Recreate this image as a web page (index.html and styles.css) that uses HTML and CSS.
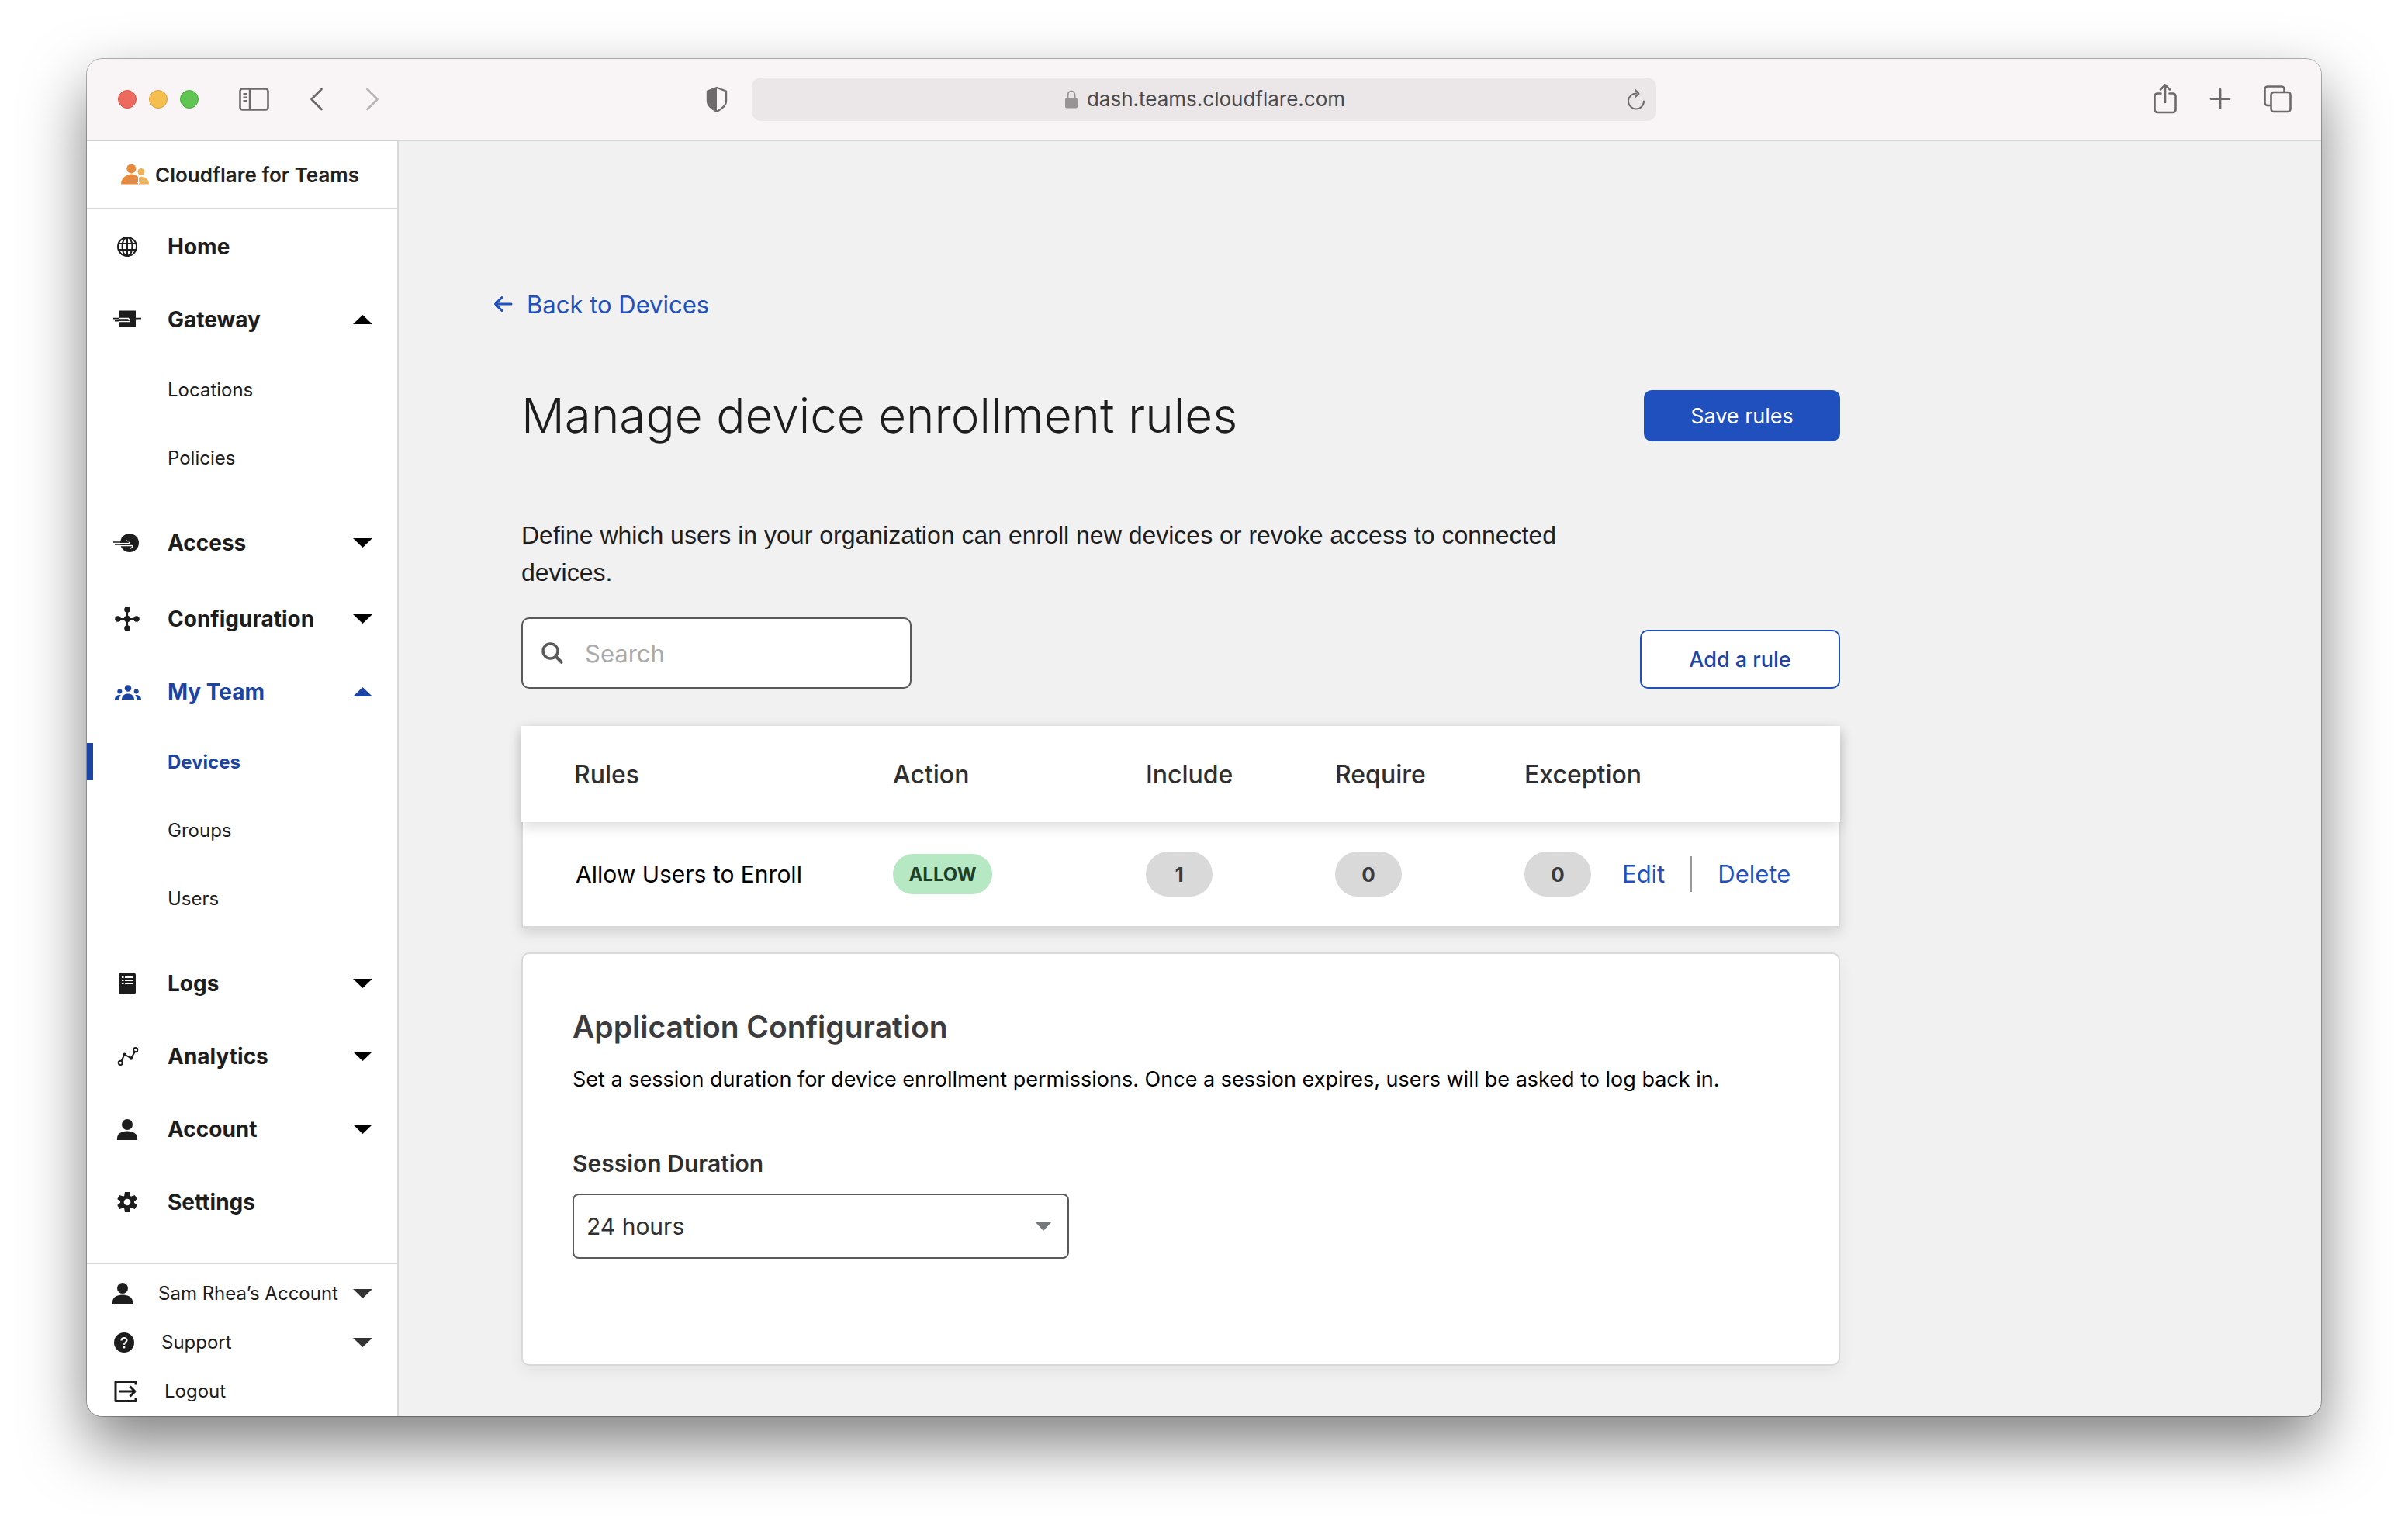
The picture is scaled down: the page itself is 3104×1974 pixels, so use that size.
FILE: index.html
```html
<!DOCTYPE html>
<html lang="en">
<head>
<meta charset="utf-8">
<title>Cloudflare for Teams</title>
<link rel="stylesheet" href="styles.css">
</head>
<body>
<div class="window">
  <header class="chrome">
    <div class="chrome-left">
      <div class="lights">
        <span class="light light-close"></span>
        <span class="light light-min"></span>
        <span class="light light-max"></span>
      </div>
      <button class="tool tool-sidebar" type="button" aria-label="Show sidebar">
        <svg width="40" height="32" viewBox="0 0 40 32" fill="none" stroke="currentColor"><rect x="1.500" y="2.500" width="36" height="27" rx="3" stroke-width="2.600"/><path d="M14 3v26" stroke-width="2.400"/><path d="M5.500 9h5M5.500 13.500h5M5.500 18h5" stroke-width="1.800"/></svg>
      </button>
      <button class="tool tool-back" type="button" aria-label="Back">
        <svg width="18" height="32" viewBox="0 0 18 32" fill="none" stroke="currentColor" stroke-width="2.800" stroke-linecap="round" stroke-linejoin="round"><path d="M15.500 3 2.500 16l13 13"/></svg>
      </button>
      <button class="tool tool-forward" type="button" aria-label="Forward" disabled>
        <svg width="18" height="32" viewBox="0 0 18 32" fill="none" stroke="currentColor" stroke-width="2.800" stroke-linecap="round" stroke-linejoin="round"><path d="M2.500 3 15.500 16l-13 13"/></svg>
      </button>
    </div>
    <div class="chrome-center">
      <button class="tool" type="button" aria-label="Privacy report">
        <svg width="28" height="34" viewBox="0 0 28 34"><path d="M14 2 26 6.500V20c0 5-5 9-12 13C7 29 2 25 2 20V6.500z" fill="none" stroke="currentColor" stroke-width="2.400" stroke-linejoin="round"/><path d="M14 2v31C7 29 2 25 2 20V6.500z" fill="currentColor"/></svg>
      </button>
      <div class="address">
        <span class="url">
          <svg width="16" height="24" viewBox="0 0 16 24"><path d="M3.500 11V6.500a4.500 5 0 0 1 9 0V11" fill="none" stroke="#989495" stroke-width="2"/><rect y="10.500" width="16" height="13" rx="2" fill="#989495"/></svg>
          dash.teams.cloudflare.com
        </span>
        <button class="tool reload" type="button" aria-label="Reload">
          <svg width="24" height="28" viewBox="0 0 24 28" fill="none" stroke="currentColor" stroke-width="2" stroke-linecap="round" stroke-linejoin="round"><path d="M12.500 6.500a10 10 0 1 0 9.500 10"/><path d="m11 2 4.500 4.700L11 11"/></svg>
        </button>
      </div>
    </div>
    <div class="chrome-right">
      <button class="tool" type="button" aria-label="Share">
        <svg width="30" height="40" viewBox="0 0 30 40" fill="none" stroke="currentColor" stroke-width="2.600" stroke-linecap="round" stroke-linejoin="round"><path d="M9.500 12.500H5A3.500 3.500 0 0 0 1.500 16v17.500A3.500 3.500 0 0 0 5 37h20a3.500 3.500 0 0 0 3.500-3.500V16a3.500 3.500 0 0 0-3.500-3.500h-4.500"/><path d="M15 24V2M9 7.500 15 1.500l6 6"/></svg>
      </button>
      <button class="tool" type="button" aria-label="New tab">
        <svg width="28" height="28" viewBox="0 0 28 28" stroke="currentColor" stroke-width="2.800" stroke-linecap="round"><path d="M14 1.500v24M2 13.500h24"/></svg>
      </button>
      <button class="tool" type="button" aria-label="Show all tabs">
        <svg width="36" height="36" viewBox="0 0 36 36" fill="none" stroke="currentColor" stroke-width="2.600" stroke-linejoin="round"><rect x="9.500" y="9" width="25" height="25" rx="3.500"/><path d="M9.500 26H5A3.500 3.500 0 0 1 1.500 22.500V5A3.500 3.500 0 0 1 5 1.500h18A3.500 3.500 0 0 1 26.500 5v4"/></svg>
      </button>
    </div>
  </header>

  <div class="app">
    <aside class="sidebar">
      <a class="brand" href="#">
        <svg width="36" height="28" viewBox="0 0 36 28"><circle cx="13.300" cy="6.500" r="6" fill="#e9893b"/><circle cx="26" cy="10.500" r="4.500" fill="#f0b257"/><path d="M0 26.500a13.300 13.300 0 0 1 22-9.500v9.500z" fill="#e9893b"/><path d="M23 17.500a9.500 9.500 0 0 1 13 9H23z" fill="#f0b257"/><path d="M8.500 22.500H29M20 24.500h4" stroke="#fff" stroke-width="1.200" opacity=".8"/></svg>
        Cloudflare for Teams
      </a>
      <nav class="nav" aria-label="Main">
        <a class="nav-row" href="#">
          <svg class="nav-icon" width="36" height="28" viewBox="0 0 36 28" fill="none" stroke="currentColor" stroke-width="2"><circle cx="18" cy="14" r="12"/><ellipse cx="18" cy="14" rx="6.500" ry="12"/><path d="M18 2v24M6.500 10h23M6.500 18h23"/></svg>
          Home
        </a>
        <button class="nav-row" type="button" aria-expanded="true">
          <svg class="nav-icon" width="36" height="28" viewBox="0 0 36 28"><path d="M8 2.500h21v21H8z" fill="currentColor"/><path d="M8 12.500h11.500l2 2.500M8 16.500h14" stroke="#fff" stroke-width="1.500" fill="none"/><path d="M0 12.700h8M29 12.700h7M2 15.600h6M8 14.800h12" stroke="currentColor" stroke-width="1.800"/></svg>
          Gateway
          <svg class="caret" width="25" height="12" viewBox="0 0 25 12"><path d="M0 12 12.500 0 25 12z"/></svg>
        </button>
        <div class="subnav">
          <a class="subnav-row" href="#">Locations</a>
          <a class="subnav-row" href="#">Policies</a>
        </div>
        <button class="nav-row nav-row-tall" type="button" aria-expanded="false">
          <svg class="nav-icon" width="36" height="28" viewBox="0 0 36 28"><circle cx="21" cy="14" r="12" fill="currentColor"/><path d="M9 14.500h12M9 17.500h15.500M16.500 10.500l5 4M25 17v2.500l-4 2" stroke="#fff" stroke-width="1.600" fill="none"/><path d="M0 13h20M2 16h20" stroke="currentColor" stroke-width="1.700"/></svg>
          Access
          <svg class="caret" width="25" height="12" viewBox="0 0 25 12"><path d="M0 0h25L12.500 12z"/></svg>
        </button>
        <button class="nav-row" type="button" aria-expanded="false">
          <svg class="nav-icon" width="36" height="34" viewBox="0 0 36 34" fill="currentColor"><path d="M18 5v24M6 17h24" stroke="currentColor" stroke-width="2.200"/><circle cx="18" cy="5" r="3.800"/><circle cx="18" cy="29" r="3.800"/><circle cx="6" cy="17" r="3.800"/><circle cx="30" cy="17" r="3.800"/><circle cx="18" cy="17" r="4.200"/></svg>
          Configuration
          <svg class="caret" width="25" height="12" viewBox="0 0 25 12"><path d="M0 0h25L12.500 12z"/></svg>
        </button>
        <button class="nav-row nav-row-current" type="button" aria-expanded="true">
          <svg class="nav-icon" width="36" height="20" viewBox="0 0 36 20" fill="currentColor"><circle cx="19" cy="5.500" r="4.300"/><circle cx="8.300" cy="9.500" r="3"/><circle cx="29.700" cy="9.500" r="3"/><path d="M11 20c0-5 3.500-7.500 8-7.500s8 2.500 8 7.500zM2 20c0-4 2.500-6.300 7.800-6-1.300 1.500-2 3.500-2 6zM36 20c0-4-2.500-6.300-7.800-6 1.300 1.500 2 3.500 2 6z"/></svg>
          My Team
          <svg class="caret" width="25" height="12" viewBox="0 0 25 12"><path d="M0 12 12.500 0 25 12z"/></svg>
        </button>
        <div class="subnav">
          <a class="subnav-row subnav-row-current" href="#" aria-current="page">Devices</a>
          <a class="subnav-row" href="#">Groups</a>
          <a class="subnav-row" href="#">Users</a>
        </div>
        <button class="nav-row" type="button" aria-expanded="false">
          <svg class="nav-icon" width="36" height="26" viewBox="0 0 36 26"><rect x="7" width="22" height="26" rx="1.500" fill="currentColor"/><path d="M11 5h2.500M15 5h10M11 9h2.500M15 9h10M11 13h2.500M15 13h10" stroke="#fff" stroke-width="2"/></svg>
          Logs
          <svg class="caret" width="25" height="12" viewBox="0 0 25 12"><path d="M0 0h25L12.500 12z"/></svg>
        </button>
        <button class="nav-row" type="button" aria-expanded="false">
          <svg class="nav-icon" width="36" height="24" viewBox="0 0 36 24" fill="none" stroke="currentColor" stroke-width="2"><path d="m10.500 18 4-8.500 8.500 5L28.500 5" stroke-linejoin="round"/><circle cx="9.300" cy="20.300" r="2.600"/><circle cx="28.700" cy="3.700" r="2.600"/><circle cx="14.500" cy="9.500" r="1" fill="currentColor"/><circle cx="23" cy="14.500" r="1.300" fill="currentColor"/></svg>
          Analytics
          <svg class="caret" width="25" height="12" viewBox="0 0 25 12"><path d="M0 0h25L12.500 12z"/></svg>
        </button>
        <button class="nav-row" type="button" aria-expanded="false">
          <svg class="nav-icon" width="36" height="27" viewBox="0 0 36 27" fill="currentColor"><circle cx="18" cy="7" r="7"/><path d="M5 27v-2c0-6 5-9.500 13-9.500S31 19 31 25v2z"/></svg>
          Account
          <svg class="caret" width="25" height="12" viewBox="0 0 25 12"><path d="M0 0h25L12.500 12z"/></svg>
        </button>
        <a class="nav-row" href="#">
          <svg class="nav-icon" width="36" height="26" viewBox="0 0 36 26"><g fill="currentColor"><circle cx="18" cy="13" r="9"/><path id="tooth" d="M15 0h6l1 6h-8z"/><use href="#tooth" transform="rotate(60 18 13)"/><use href="#tooth" transform="rotate(120 18 13)"/><use href="#tooth" transform="rotate(180 18 13)"/><use href="#tooth" transform="rotate(240 18 13)"/><use href="#tooth" transform="rotate(300 18 13)"/></g><circle cx="18" cy="13" r="4.300" fill="#fff"/></svg>
          Settings
        </a>
      </nav>
      <div class="side-foot">
        <button class="foot-row" type="button">
          <svg class="foot-icon" width="26" height="27" viewBox="0 0 26 27" fill="currentColor"><circle cx="13" cy="7" r="7"/><path d="M0 27v-2c0-6 5-9.500 13-9.500S26 19 26 25v2z"/></svg>
          Sam Rhea’s Account
          <svg class="caret" width="25" height="12" viewBox="0 0 25 12"><path d="M0 0h25L12.500 12z"/></svg>
        </button>
        <button class="foot-row" type="button">
          <svg class="foot-icon" width="30" height="26" viewBox="0 0 30 26"><circle cx="15" cy="13" r="13" fill="currentColor"/><path d="M11.500 10.500c0-4.500 7-4.500 7-.4 0 2.600-3.500 2.800-3.500 5.700" stroke="#fff" stroke-width="2.200" fill="none"/><circle cx="15" cy="18.900" r="1.500" fill="#fff"/></svg>
          Support
          <svg class="caret" width="25" height="12" viewBox="0 0 25 12"><path d="M0 0h25L12.500 12z"/></svg>
        </button>
        <a class="foot-row" href="#">
          <svg class="foot-icon" width="34" height="30" viewBox="0 0 34 30" fill="none" stroke="currentColor" stroke-width="3"><path d="M30 6.500V2.500H4v25h26v-4M9 15h20M22.500 8.500 29 15l-6.500 6.500" stroke-linejoin="round"/></svg>
          Logout
        </a>
      </div>
    </aside>

    <main class="main">
      <a class="back" href="#">
        <svg width="26" height="26" viewBox="0 0 26 26" fill="none" stroke="currentColor" stroke-width="3" stroke-linecap="round" stroke-linejoin="round"><path d="M23 13H3M11 4.500 2.500 13l8.500 8.500"/></svg>
        Back to Devices
      </a>
      <div class="page-head">
        <h1>Manage device enrollment rules</h1>
        <button class="btn btn-primary" type="button">Save rules</button>
      </div>
      <p class="intro">Define which users in your organization can enroll new devices or revoke access to connected devices.</p>
      <div class="toolbar">
        <label class="search">
          <svg width="28" height="28" viewBox="0 0 28 28" fill="none" stroke="#595959" stroke-width="3.400"><circle cx="11.500" cy="11.500" r="9.500"/><path d="m18.500 18.500 8.500 8.500" stroke-width="4"/></svg>
          <input type="search" placeholder="Search" aria-label="Search rules">
        </label>
        <button class="btn btn-outline" type="button">Add a rule</button>
      </div>
      <table class="rules">
        <colgroup><col class="c-name"><col class="c-action"><col class="c-count"><col class="c-count"><col class="c-except"><col></colgroup>
        <thead>
          <tr><th scope="col">Rules</th><th scope="col">Action</th><th scope="col">Include</th><th scope="col">Require</th><th scope="col" colspan="2">Exception</th></tr>
        </thead>
        <tbody>
          <tr>
            <td>Allow Users to Enroll</td>
            <td><span class="badge">ALLOW</span></td>
            <td><span class="pill">1</span></td>
            <td><span class="pill">0</span></td>
            <td><span class="pill">0</span></td>
            <td><div class="row-actions"><a href="#">Edit</a><a href="#">Delete</a></div></td>
          </tr>
        </tbody>
      </table>
      <section class="card">
        <h2>Application Configuration</h2>
        <p>Set a session duration for device enrollment permissions. Once a session expires, users will be asked to log back in.</p>
        <label for="duration">Session Duration</label>
        <div class="select">
          <select id="duration"><option>24 hours</option></select>
          <svg width="22" height="12" viewBox="0 0 22 12"><path d="M0 0h22L11 12z" fill="#75797c"/></svg>
        </div>
      </section>
    </main>
  </div>
</div>
</body>
</html>
```
FILE: styles.css
```css
* { box-sizing: border-box; }

body {
  margin: 0;
  padding: 76px 112px 148px;
  background: #fff;
  color: #1d1d1d;
  font-family: Inter, "Liberation Sans", sans-serif;
  font-size: 30px;
}

a { color: inherit; text-decoration: none; }

button {
  margin: 0;
  padding: 0;
  border: 0;
  background: none;
  color: inherit;
  font: inherit;
  text-align: left;
}

svg { display: block; flex: none; }

.window {
  display: flex;
  flex-direction: column;
  min-height: calc(100vh - 224px);
  border-radius: 20px;
  background: #f1f1f1;
  box-shadow: 0 0 0 1px rgba(0, 0, 0, .28), 0 36px 80px rgba(0, 0, 0, .5);
  overflow: hidden;
}

/* Browser toolbar */
.chrome {
  display: grid;
  grid-template-columns: 1fr auto 1fr;
  align-items: center;
  height: 106px;
  padding: 0 38px 0 40px;
  border-bottom: 2px solid #d3d1d2;
  background: #f9f5f6;
}

.chrome-left, .chrome-center, .chrome-right, .lights { display: flex; align-items: center; }
.lights { gap: 16px; }
.light { width: 24px; height: 24px; border: 1px solid; border-radius: 50%; }
.light-close { background: #ed6a5e; border-color: #d65549; }
.light-min { background: #f5bf4f; border-color: #d9a23c; }
.light-max { background: #61c554; border-color: #4dab41; }
.tool { color: #6e6a6b; }
.tool-sidebar { margin-left: 52px; }
.tool-back { margin-left: 51px; }
.tool-forward { margin-left: 54px; color: #b9b5b6; }
.chrome-center { gap: 31px; padding-right: 62px; }
.chrome-right { justify-content: flex-end; gap: 42px; }

.address {
  display: flex;
  align-items: center;
  width: 1166px;
  height: 56px;
  padding: 0 14px 0 42px;
  border-radius: 12px;
  background: #ebe7e8;
}

.url {
  display: flex;
  flex: 1;
  align-items: center;
  justify-content: center;
  gap: 12px;
  color: #4c4a4b;
  font-size: 26px;
  line-height: 36px;
}

/* App frame */
.app { display: flex; flex: 1; }

.sidebar {
  display: flex;
  flex: none;
  flex-direction: column;
  width: 402px;
  border-right: 2px solid #d9d9d9;
  background: #fff;
}

.brand {
  display: flex;
  align-items: center;
  gap: 8px;
  height: 88px;
  padding-left: 44px;
  border-bottom: 2px solid #d9d9d9;
  color: #222;
  font-size: 26px;
  font-weight: 600;
}

.nav { flex: 1; padding-top: 1px; }

.nav-row {
  display: flex;
  align-items: center;
  gap: 34px;
  width: 100%;
  height: 94px;
  padding: 0 32px 0 34px;
  font-size: 28px;
  font-weight: 700;
}

.nav-row-tall { margin-bottom: 4px; }
.nav-row-current, .subnav-row-current { color: #1c44a2; }
.caret { margin-left: auto; fill: #000; }
.nav-row-current .caret { fill: currentColor; }

.subnav {
  display: flex;
  flex-direction: column;
  gap: 40px;
  padding: 19px 0 39px;
}

.subnav-row {
  display: flex;
  align-items: center;
  height: 48px;
  padding-left: 104px;
  font-size: 24px;
}

.subnav-row-current {
  padding-left: 96px;
  border-left: 8px solid #1c44a2;
  font-weight: 700;
}

.side-foot { padding: 6px 0 1px; border-top: 2px solid #d9d9d9; }

.foot-row {
  display: flex;
  align-items: center;
  width: 100%;
  height: 63px;
  padding: 0 32px 0 33px;
  font-size: 24px;
  white-space: nowrap;
}

.foot-icon { margin-right: 33px; }
.foot-row .caret { fill: #333; }

/* Page */
.main { width: 100%; max-width: 1858px; padding: 186px 0 60px 158px; }

.back {
  display: flex;
  align-items: center;
  gap: 17px;
  width: max-content;
  height: 48px;
  margin-left: -36px;
  color: #1f50bd;
  font-size: 31px;
}

.page-head {
  display: flex;
  align-items: center;
  justify-content: space-between;
  margin-top: 80px;
}

h1 {
  margin: 0;
  font-size: 62px;
  font-weight: 300;
  line-height: 80px;
}

.btn { border-radius: 10px; font-size: 27px; text-align: center; }
.btn-primary { width: 253px; height: 66px; background: #1f50bd; color: #fff; }

.btn-outline {
  width: 258px;
  height: 76px;
  border: 2px solid #1f50bd;
  background: #fff;
  color: #1c44a2;
  font-weight: 500;
}

.intro {
  max-width: 1400px;
  margin: 90px 0 0;
  font-family: "Liberation Sans", sans-serif;
  font-size: 32px;
  line-height: 48px;
}

.toolbar {
  display: flex;
  align-items: flex-end;
  justify-content: space-between;
  margin-top: 34px;
}

.search {
  display: flex;
  align-items: center;
  gap: 28px;
  width: 503px;
  height: 92px;
  padding: 0 24px;
  border: 2px solid #595959;
  border-radius: 10px;
  background: #fff;
}

.search input {
  width: 100%;
  padding: 0;
  border: 0;
  outline: 0;
  background: none;
  font-family: inherit;
  font-size: 31px;
}

.search input::placeholder { color: #aaa; }

.rules {
  width: 100%;
  margin-top: 48px;
  border-spacing: 0;
  background: #fff;
  box-shadow: 0 6px 16px rgba(0, 0, 0, .14);
  table-layout: fixed;
}

.c-name { width: 479px; }
.c-action { width: 326px; }
.c-count { width: 244px; }
.c-except { width: 126px; }
.rules thead { position: relative; box-shadow: 0 6px 16px rgba(0, 0, 0, .14); }

.rules th {
  height: 124px;
  padding: 0;
  background: #fff;
  color: #2f2f30;
  font-size: 32px;
  font-weight: 500;
  text-align: left;
}

.rules td { height: 136px; padding: 0; border-bottom: 2px solid #d9d9d9; color: #000; }
.rules th:first-child, .rules td:first-child { padding-left: 68px; }
.rules td:first-child { border-left: 2px solid #d9d9d9; }
.rules td:last-child { border-right: 2px solid #d9d9d9; }

.badge, .pill { display: flex; align-items: center; justify-content: center; font-weight: 700; }

.badge {
  width: 128px;
  height: 52px;
  border-radius: 26px;
  background: #b5e8c3;
  color: #1e4026;
  font-size: 24px;
}

.pill {
  width: 86px;
  height: 58px;
  border-radius: 29px;
  background: #d9d9d9;
  color: #3b3b3d;
  font-size: 26px;
}

.row-actions { display: flex; align-items: center; color: #1f50bd; font-size: 31px; }
.row-actions a { line-height: 46px; }

.row-actions a + a {
  margin-left: 33px;
  padding-left: 33px;
  border-left: 2px solid #999;
}

.card {
  margin-top: 32px;
  padding: 70px 64px 136px;
  border: 2px solid #d9d9d9;
  border-radius: 10px;
  background: #fff;
  box-shadow: 0 8px 20px rgba(0, 0, 0, .06);
}

.card h2 {
  margin: 0;
  color: #3b3b3d;
  font-size: 39px;
  font-weight: 600;
  line-height: 48px;
}

.card p { margin: 24px 0 68px; color: #000; font-size: 27px; line-height: 40px; }

.card label {
  display: block;
  color: #2f2f30;
  font-weight: 600;
  line-height: 40px;
}

.select { display: grid; align-items: center; width: 640px; margin-top: 19px; }
.select > * { grid-area: 1 / 1; }
.select svg { justify-self: end; margin-right: 22px; pointer-events: none; }

.select select {
  width: 100%;
  height: 84px;
  padding: 0 16px;
  border: 2px solid #595959;
  border-radius: 8px;
  appearance: none;
  background: #fff;
  color: #2f2f30;
  font: inherit;
}
```
